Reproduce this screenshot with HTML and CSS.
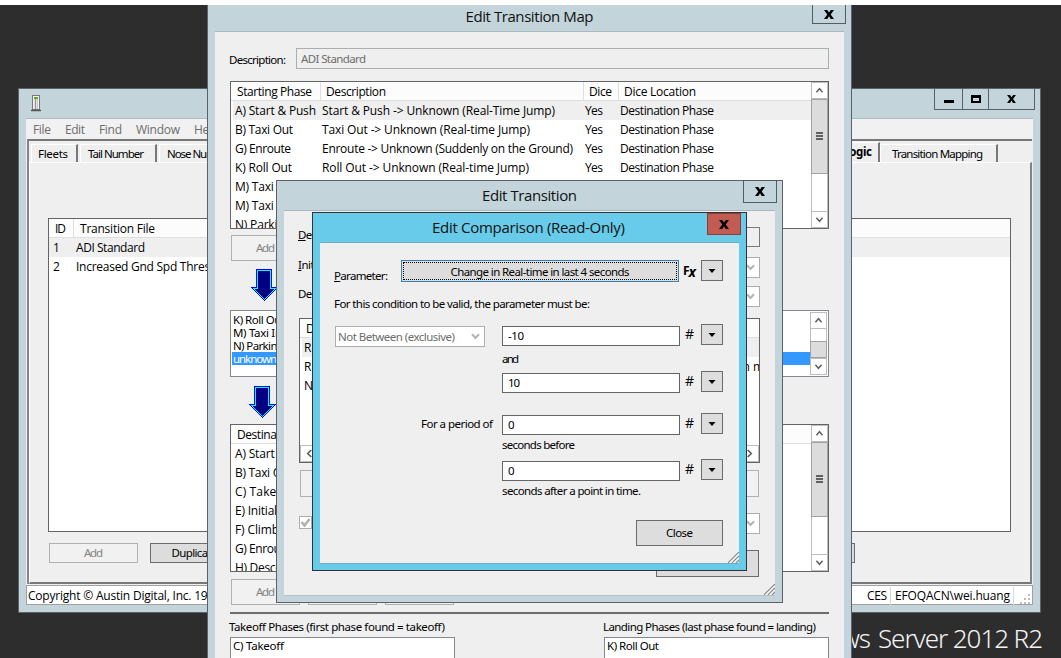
FILE: index.html
```html
<!DOCTYPE html>
<html lang="en">
<head>
<meta charset="utf-8">
<title>Edit Transition Map</title>
<link rel="stylesheet" href="styles.css">
</head>
<body>
<svg class="defs" width="0" height="0">
  <symbol id="up" viewBox="0 0 17 17"><path d="M5 10.5 8.5 6.5 12 10.5" fill="none" stroke="#606060" stroke-width="1.7"/></symbol>
  <symbol id="down" viewBox="0 0 17 17"><path d="M5 6.5 8.5 10.5 12 6.5" fill="none" stroke="#606060" stroke-width="1.7"/></symbol>
  <symbol id="grip" viewBox="0 0 17 17"><path d="M5 5h7M5 8h7M5 11h7" stroke="#606060" stroke-width="2"/></symbol>
  <symbol id="x" viewBox="0 0 10 9"><path d="M0 0h3.2L5 2.5 6.800 0H10L6.700 4.400 10 9H6.700L5 6.300 3.300 9H0L3.300 4.400z" fill="#000"/></symbol>
  <symbol id="tri" viewBox="0 0 7 4"><path d="M0 0h7L3.500 4z" fill="#000"/></symbol>
  <symbol id="chev" viewBox="0 0 9 7"><path d="M1 1.200 4.500 5 8 1.200" fill="none" stroke="#b4b4b4" stroke-width="2"/></symbol>
  <symbol id="arrow" viewBox="0 0 28 32"><g shape-rendering="crispEdges"><path d="M6 0H22V18H28L14 32 0 18H6z" fill="#00f"/><path d="M7 1H21V19H26L14 31 2 19H7z" fill="#0ff"/><path d="M8 2H20V20H24L14 30 4 20H8z" fill="#000080"/></g></symbol>
  <symbol id="size" viewBox="0 0 11 11"><path d="M0 11 11 0M4 11 11 4M8 11 11 8" stroke="#8c8c8c" stroke-width="1.300"/><path d="M1.500 11 11 1.500M5.500 11 11 5.500" stroke="#fff"/></symbol>
</svg>
<div class="desktop">
  <div class="wm">
    <div class="wm-line"><span data-w="100">Windows</span><span data-w="165">Server 2012 R2</span></div>
    <div class="wm-act"><span data-w="144">Activate Windows</span></div>
  </div>

  <section class="win main">
    <div class="main-bar">
      <svg class="app" width="10" height="17" viewBox="0 0 10 17"><rect x="1.500" y=".5" width="7" height="14" fill="#f4f4f4" stroke="#777"/><path d="M4.500 4v10" stroke="#999" stroke-width="1.500"/><path d="M6.500 3v11" stroke="#ccc"/><rect x="3" y="2" width="4" height="2" fill="#4caf2b"/><path d="M0 15.500h10" stroke="#555" stroke-width="1.500"/></svg>
      <div class="caps">
        <div class="c1"><svg width="10" height="9"><path d="M0 5h10v3H0z"/></svg></div>
        <div class="c2"><svg width="10" height="9"><path d="M0 0h10v8H0zM2 3v3h6V3z" fill-rule="evenodd"/></svg></div>
        <div class="c3"><svg width="9" height="8"><use href="#x"/></svg></div>
      </div>
    </div>
    <div class="main-client">
      <div class="menu"><span data-w="18">File</span><span data-w="20">Edit</span><span data-w="23">Find</span><span data-w="44">Window</span><span data-w="25">Help</span></div>
      <div class="mdi">
        <div class="tabs">
          <div class="tab t1"><span data-w="30">Fleets</span></div>
          <div class="tab t2"><span data-w="56">Tail Number</span></div>
          <div class="tab t3"><span data-w="65">Nose Number</span></div>
          <div class="tab t4"><span data-w="62">Event Logic</span></div>
          <div class="tab t5"><span data-w="91">Transition Mapping</span></div>
        </div>
        <div class="pane">
          <div class="files">
            <div class="head"><div class="f-id"><span data-w="11">ID</span></div><div class="f-name"><span data-w="75">Transition File</span></div></div>
            <div class="row sel"><div class="f-id">1</div><div class="f-name"><span data-w="69">ADI Standard</span></div></div>
            <div class="row"><div class="f-id">2</div><div class="f-name"><span data-w="158">Increased Gnd Spd Threshold</span></div></div>
          </div>
          <div class="main-btns"><div class="btn off"><span data-w="19">Add</span></div><div class="btn"><span data-w="46">Duplicate</span></div><div class="btn last"></div></div>
        </div>
      </div>
      <div class="status"><span data-w="193">Copyright © Austin Digital, Inc. 1996</span><div class="s-ces"><span data-w="20">CES</span></div><div class="s-user"><span data-w="115">EFOQACN\wei.huang</span></div><svg width="18" height="17"><path d="M14 7h2M10 11h2M14 11h2M6 15h2M10 15h2M14 15h2" stroke="#bbb" stroke-width="2"/></svg></div>
    </div>
  </section>

  <section class="win map">
    <div class="title"><span data-w="128">Edit Transition Map</span></div>
    <div class="close"><svg width="10" height="9"><use href="#x"/></svg></div>
    <div class="client">
      <div class="desc"><label><span data-w="57">Description:</span></label><div class="field off"><span data-w="65">ADI Standard</span></div></div>
      <div class="list phases">
        <div class="table">
          <div class="head"><div class="p1"><span data-w="75">Starting Phase</span></div><div class="p2"><span data-w="60">Description</span></div><div class="p3"><span data-w="23">Dice</span></div><div class="p4"><span data-w="72">Dice Location</span></div></div>
          <div class="row sel"><div class="p1"><span data-w="81">A) Start &amp; Push</span></div><div class="p2"><span data-w="233">Start &amp; Push -&gt; Unknown (Real-Time Jump)</span></div><div class="p3"><span data-w="18">Yes</span></div><div class="p4"><span data-w="94">Destination Phase</span></div></div>
          <div class="row"><div class="p1"><span data-w="58">B) Taxi Out</span></div><div class="p2"><span data-w="208">Taxi Out -&gt; Unknown (Real-time Jump)</span></div><div class="p3"><span data-w="18">Yes</span></div><div class="p4"><span data-w="94">Destination Phase</span></div></div>
          <div class="row"><div class="p1"><span data-w="56">G) Enroute</span></div><div class="p2"><span data-w="251">Enroute -&gt; Unknown (Suddenly on the Ground)</span></div><div class="p3"><span data-w="18">Yes</span></div><div class="p4"><span data-w="94">Destination Phase</span></div></div>
          <div class="row"><div class="p1"><span data-w="57">K) Roll Out</span></div><div class="p2"><span data-w="207">Roll Out -&gt; Unknown (Real-time Jump)</span></div><div class="p3"><span data-w="18">Yes</span></div><div class="p4"><span data-w="94">Destination Phase</span></div></div>
          <div class="row"><div class="p1"><span data-w="52">M) Taxi In</span></div></div>
          <div class="row"><div class="p1"><span data-w="52">M) Taxi In</span></div></div>
          <div class="row"><div class="p1"><span data-w="56">N) Parking</span></div></div>
        </div>
        <div class="sb"><svg><use href="#up"/></svg><div class="thumb"><svg><use href="#grip"/></svg></div><i></i><svg><use href="#down"/></svg></div>
      </div>
      <div class="btns b1"><div class="btn off"><span data-w="19">Add</span></div></div>
      <svg class="arrow a1" width="28" height="32"><use href="#arrow"/></svg>
      <div class="list box">
        <div class="table"><div><span data-w="52">K) Roll Out</span></div><div><span data-w="49">M) Taxi In</span></div><div><span data-w="51">N) Parking</span></div><div class="picked"><span data-w="44">unknown</span></div></div>
        <div class="sb small"><svg><use href="#up"/></svg><i></i><div class="thumb"></div><svg><use href="#down"/></svg></div>
      </div>
      <svg class="arrow a2" width="28" height="32"><use href="#arrow"/></svg>
      <div class="list dest">
        <div class="table">
          <div class="head"><div class="p1 wide"><span data-w="94">Destination Phase</span></div></div>
          <div class="row"><div class="p1"><span data-w="81">A) Start &amp; Push</span></div></div>
          <div class="row"><div class="p1"><span data-w="58">B) Taxi Out</span></div></div>
          <div class="row"><div class="p1"><span data-w="57">C) Takeoff</span></div></div>
          <div class="row"><div class="p1"><span data-w="76">E) Initial Climb</span></div></div>
          <div class="row"><div class="p1"><span data-w="44">F) Climb</span></div></div>
          <div class="row"><div class="p1"><span data-w="56">G) Enroute</span></div></div>
          <div class="row"><div class="p1"><span data-w="58">H) Descent</span></div></div>
        </div>
        <div class="sb"><svg><use href="#up"/></svg><div class="thumb"><svg><use href="#grip"/></svg></div><i></i><svg><use href="#down"/></svg></div>
      </div>
      <div class="btns b2"><div class="btn off"><span data-w="19">Add</span></div><div class="btn off"></div><div class="btn off"></div></div>
      <div class="rule"></div>
      <div class="ends">
        <div><label><span data-w="216">Takeoff Phases (first phase found = takeoff)</span></label><div class="endbox"><span data-w="51">C) Takeoff</span></div></div>
        <div><label><span data-w="213">Landing Phases (last phase found = landing)</span></label><div class="endbox"><span data-w="52">K) Roll Out</span></div></div>
      </div>
    </div>
  </section>

  <section class="win trans">
    <div class="title"><span data-w="95">Edit Transition</span></div>
    <div class="close"><svg width="10" height="9"><use href="#x"/></svg></div>
    <div class="client">
      <div class="line l1"><label><span data-w="57"><u>D</u>escription:</span></label><div class="field off"></div></div>
      <div class="line l2"><label><span data-w="60"><u>I</u>nitial Phase</span></label><div class="combo"><svg width="9" height="7"><use href="#chev"/></svg></div></div>
      <div class="line l3"><label><span data-w="57">Destination</span></label><div class="combo"><svg width="9" height="7"><use href="#chev"/></svg></div></div>
      <div class="list conds">
        <div class="head"><span data-w="60">Description</span></div>
        <div class="row sel">Real-time</div>
        <div class="row">Real-time<span class="far">n m</span></div>
        <div class="row">Not</div>
        <div class="hsb"><svg viewBox="0 0 17 17"><path d="M10.500 4.500 6.500 8.500 10.500 12.500" fill="none" stroke="#606060" stroke-width="1.900"/></svg><i></i><svg viewBox="0 0 17 17"><path d="M6.500 4.500 10.500 8.500 6.500 12.500" fill="none" stroke="#606060" stroke-width="1.900"/></svg></div>
      </div>
      <div class="btn off bar"></div>
      <div class="line l4"><div class="check"><svg width="11" height="11"><path d="M1.500 5 4.500 8.500 9.500 2" fill="none" stroke="#b0b0b0" stroke-width="2.600"/></svg></div><div class="combo"><svg width="9" height="7"><use href="#chev"/></svg></div></div>
      <div class="btn ok"></div>
    </div>
    <svg class="size" width="11" height="11"><use href="#size"/></svg>
  </section>

  <section class="win comp">
    <div class="title"><span data-w="193">Edit Comparison (Read-Only)</span></div>
    <div class="close"><svg width="10" height="9"><use href="#x"/></svg></div>
    <div class="client">
      <div class="c-row r1"><label><span data-w="54"><u>P</u>arameter:</span></label><div class="btn focus"><div><span data-w="179">Change in Real-time in last 4 seconds</span></div></div><div class="fx">F<em>x</em></div><div class="btn dd"><svg width="8" height="4"><use href="#tri"/></svg></div></div>
      <p class="intro"><span data-w="256">For this condition to be valid, the parameter must be:</span></p>
      <div class="c-row r2"><div class="combo"><span data-w="117">Not Between (exclusive)</span><svg width="9" height="7"><use href="#chev"/></svg></div><div class="field"><span data-w="16">-10</span></div><b>#</b><div class="btn dd"><svg width="8" height="4"><use href="#tri"/></svg></div></div>
      <p class="under"><span data-w="17">and</span></p>
      <div class="c-row r3"><div class="field"><span data-w="12">10</span></div><b>#</b><div class="btn dd"><svg width="8" height="4"><use href="#tri"/></svg></div></div>
      <div class="c-row r4"><label><span data-w="72">For a period of</span></label><div class="field">0</div><b>#</b><div class="btn dd"><svg width="8" height="4"><use href="#tri"/></svg></div></div>
      <p class="under"><span data-w="73">seconds before</span></p>
      <div class="c-row r5"><div class="field">0</div><b>#</b><div class="btn dd"><svg width="8" height="4"><use href="#tri"/></svg></div></div>
      <p class="under"><span data-w="139">seconds after a point in time.</span></p>
      <div class="btn done"><span data-w="27">Close</span></div>
    </div>
    <svg class="size" width="11" height="11"><use href="#size"/></svg>
  </section>
</div>
<script src="fit.js"></script>
</body>
</html>
```
FILE: styles.css
```css
* { box-sizing: border-box; }
body { margin: 0; background: #fff; font: 11.5px/14px "Noto Sans", "Open Sans", sans-serif; color: #000; }
.defs { position: absolute; }
svg { display: block; flex: none; }
p { margin: 0; }
[data-w] { display: inline-block; white-space: pre; }
.desktop { position: relative; width: 1061px; height: 658px; overflow: hidden; background: #2d2d2d; border-top: 5px solid #fff; }

.wm { position: absolute; right: 18px; top: 614px; color: #f4f4f4; font-family: "Noto Sans", sans-serif; }
.wm-line { display: flex; justify-content: flex-end; gap: 7px; font-size: 26px; line-height: 38px; font-weight: 300; }
.wm-act { margin: -4px 0 0 92px; font-size: 18px; line-height: 26px; color: #858585; width: 173px; }

/* windows */
.win { position: absolute; background: #c3d5db; border: 1px solid #5b6069; }
.title { text-align: center; font: 15px/20px "Open Sans", sans-serif; color: #111; }
.close { position: absolute; top: -1px; right: 5px; width: 34px; height: 23px; border: 1px solid #555b66; display: flex; align-items: center; justify-content: center; }
.client { background: #efefef; border-top: 1px solid #a9b8be; border-bottom: 1px solid #b4c1c7; }
.size { position: absolute; right: 7px; bottom: 7px; }

/* controls */
.btn { border: 1px solid #6c6c6c; background: #ddd; display: flex; align-items: center; justify-content: center; flex: none; }
.btn.off { border-color: #adb2b5; background: #f1f1f1; color: #838383; }
.field { border: 1px solid #646464; background: #fff; display: flex; align-items: center; padding-left: 5px; flex: none; }
.field.off { background: #efefef; border-color: #a8aeb1; color: #6d6d6d; }
.combo { border: 1px solid #adadad; background: #fff; display: flex; align-items: center; justify-content: space-between; color: #6d6d6d; padding: 0 4px 0 2px; flex: none; }
.list { border: 1px solid #646464; background: #fff; overflow: hidden; display: flex; }
.table { flex: 1; min-width: 0; overflow: hidden; }
.head, .row { display: flex; height: 19px; font: 12px/20px "Open Sans", sans-serif; white-space: nowrap; }
.head { background: #fcfcfc; border-bottom: 1px solid #dedede; }
.row.sel { background: linear-gradient(90deg, #fff 2px, #efefef 2px); }
.sb { width: 17px; display: flex; flex-direction: column; background: #fff; border-left: 1px solid #bcbcbc; border-right: 1px solid #bcbcbc; flex: none; }
.sb > svg { width: 15px; height: 17px; border: solid #bcbcbc; border-width: 1px 0; }
.sb i { flex: 1; }
.thumb { height: 75px; margin: 0 -1px; background: #dcdcdc; border: 1px solid #a2a2a2; display: flex; align-items: center; justify-content: center; }
.thumb svg { width: 17px; height: 17px; }

/* main window */
.main { left: 18px; top: 83px; width: 1023px; height: 525px; padding: 0 7px 7px; }
.main-bar { height: 29px; display: flex; justify-content: space-between; }
.app { margin: 6px 0 0 5px; }
.caps { display: flex; margin: -1px -2px 0 0; height: 22px; }
.caps div { border: 1px solid #5b6069; border-right: 0; display: flex; align-items: center; justify-content: center; }
.caps .c1 { width: 28px; } .caps .c2 { width: 26px; }
.caps .c3 { width: 47px; border-right: 1px solid #5b6069; }
.main-client { height: 487px; background: #efefef; border-top: 1px solid #aebcc3; }
.menu { height: 20px; padding-left: 7px; display: flex; gap: 14px; font: 12px/21px "Open Sans", sans-serif; color: #6d6d6d; background: #f1f1f1; }
.mdi { margin: 0 1px; height: 445px; border-top: 2px solid #777; border-left: 2px solid #858585; display: flex; flex-direction: column; }
.tabs { height: 21px; display: flex; align-items: flex-end; padding-left: 2px; }
.tab { height: 18px; border-top: 1px solid #fff; border-left: 1px solid #fff; border-right: 2px solid #777; line-height: 18px; padding-left: 6px; margin-right: 2px; overflow: hidden; }
.t1 { width: 47px; } .t2 { width: 77px; padding-left: 7px; } .t3 { width: 85px; padding-left: 7px; }
.t4 { width: 100px; height: 20px; margin-left: 534px; margin-right: 0; text-align: right; padding-right: 6px; font-weight: bold; }
.t5 { width: 118px; padding-left: 11px; }
.pane { flex: 1; border-top: 1px solid #fff; border-left: 1px solid #fff; border-right: 2px solid #828282; border-bottom: 2px solid #777; padding: 55px 18px 0; }
.files { width: 963px; height: 314px; border: 1px solid #646464; background: #fff; }
.f-id { width: 27px; padding-left: 4px; }
.head .f-id { width: 25px; padding-left: 6px; border-right: 1px solid #dedede; }
.head .f-name { padding-left: 6px; }
.files .row.sel { background: #efefef; }
.main-btns { display: flex; margin: 11px 0 0 1px; gap: 12px; }
.main-btns .btn { width: 89px; height: 20px; }
.main-btns .last { margin-left: 515px; }
.status { margin-top: 1px; height: 20px; background: #fff; border: 1px solid #a0a0a0; display: flex; align-items: center; padding: 2px 0 0 1px; font: 12px/18px "Open Sans", sans-serif; }
.s-ces { margin-left: auto; border-right: 1px solid #d7d7d7; padding-right: 3px; }
.s-user { padding: 0 3px 0 4px; border-right: 1px solid #d7d7d7; }

/* map window */
.map { left: 207px; top: -1px; width: 645px; height: 680px; padding: 0 7px; }
.map .title { height: 26px; line-height: 23px; }
.map .close { height: 20px; top: -1px; }
.map .client { height: 650px; padding: 0 14px 0 15px; }
.desc { display: flex; align-items: center; margin-top: 16px; height: 21px; }
.desc label { width: 66px; margin-left: -1px; margin-right: 1px; padding-top: 2px; }
.desc .field { width: 533px; height: 21px; padding-left: 4px; }
.phases { margin-top: 12px; width: 599px; height: 148px; }
.p1 { width: 91px; padding-left: 4px; }
.p2 { width: 263px; }
.p3 { width: 35px; }
.head .p1 { width: 90px; padding-left: 6px; border-right: 1px solid #dedede; }
.head .p1.wide { width: 200px; }
.head .p2 { padding-left: 5px; border-right: 1px solid #dedede; }
.head .p3 { padding-left: 5px; border-right: 1px solid #dedede; }
.head .p4 { padding-left: 5px; }
.btns { display: flex; gap: 8px; margin-left: 1px; }
.btns .btn { width: 69px; height: 26px; }
.b1 { margin-top: 6px; }
.arrow { margin: 8px 0 0 20px; }
.a2 { margin: 9px 0 0 18px; }
.box { margin-top: 9px; width: 599px; height: 67px; border-color: #828790; padding: 1px; }
.box .table { line-height: 13px; padding-top: 1px; }
.box .table div { padding-left: 1px; height: 13px; }
.box .picked { background: #39f; color: #fff; }
.small .thumb { height: 17px; }
.dest { margin-top: 6px; width: 599px; height: 148px; }
.b2 { margin-top: 7px; }
.rule { margin-top: 7px; height: 2px; width: 599px; background: #6c6c6c; }
.ends { display: flex; justify-content: space-between; margin-top: 6px; width: 599px; }
.ends > div { width: 225px; }
.ends label { display: block; margin-left: -1px; height: 17px; white-space: nowrap; }
.endbox { height: 40px; border: 1px solid #828790; background: #fff; padding: 1px 2px; }

/* transition window */
.trans { left: 276px; top: 175px; width: 507px; height: 423px; padding: 0 7px; }
.trans .title { height: 29px; line-height: 29px; }
.trans .client { height: 386px; padding: 16px 15px 0; }
.line { display: flex; justify-content: space-between; height: 21px; }
.line label { margin-left: -1px; padding-top: 1px; }
.line .field { width: 380px; height: 20px; border-color: #7a7a7a; }
.line .combo { width: 380px; height: 21px; justify-content: flex-end; }
.l2 { margin-top: 9px; } .l3 { margin-top: 8px; }
.conds { margin-top: 11px; height: 145px; flex-direction: column; }
.conds .row { padding-left: 4px; }
.conds .head { padding-left: 6px; }
.far { margin-left: auto; margin-right: -5px; }
.hsb { margin-top: auto; height: 17px; display: flex; border: 1px solid #bcbcbc; }
.hsb i { flex: 1; } .hsb svg { width: 17px; height: 15px; }
.bar { margin: 7px 1px 0; height: 27px; }
.l4 { margin-top: 16px; }
.check { width: 13px; height: 13px; margin-top: 3px; background: #fff; border: 1px solid #adadad; }
.ok { margin: 16px 1px 0 auto; width: 103px; height: 27px; }

/* comparison window */
.comp { left: 312px; top: 207px; width: 435px; height: 359px; padding: 0 7px; background: #68cbe9; border-color: #2f3338; }
.comp .title { height: 29px; line-height: 29px; padding-right: 2px; }
.comp .close { background: #c25b51; border-color: #8d3b35; height: 22px; top: 0; }
.comp .client { height: 322px; padding: 17px 16px 0 14px; border-color: #75aabd; }
.c-row { display: flex; justify-content: flex-end; height: 22px; }
.c-row .dd { width: 22px; height: 21px; }
.c-row .field { width: 178px; height: 20px; margin-top: 2px; }
.c-row b { width: 21px; padding-left: 5px; font: 14px/20px "Open Sans", sans-serif; }
.c-row .combo { width: 150px; height: 21px; margin-top: 2px; margin-right: 17px; }
.r1 label { margin-right: 13px; padding-top: 9px; }
.focus { width: 278px; height: 22px; padding: 1px; border-color: #3c7fb1; }
.focus div { flex: 1; height: 18px; line-height: 17px; border: 1px dotted #000; text-align: center; }
.fx { width: 22px; padding-left: 4px; font: bold 12px/19px "Open Sans", sans-serif; }
.fx em { font-size: 14px; position: relative; top: 2px; left: -1px; }
.intro { margin-top: 15px; height: 27px; }
.under { padding-left: 168px; height: 14px; margin-top: 6px; }
.r3 { margin-top: 5px; }
.r4 { margin-top: 20px; } .r4 label { margin-right: 9px; padding-top: 4px; }
.r4 + .under { margin-top: 3px; }
.r5 { margin-top: 7px; } .r5 + .under { margin-top: 3px; }
.done { width: 87px; height: 26px; margin: 22px 0 0 auto; }
```
FILE: fit.js
```js
document.querySelectorAll('[data-w]').forEach(function (el) {
  var n = el.textContent.length;
  var diff = Number(el.dataset.w) - el.getBoundingClientRect().width;
  var gap = diff / (n - 1);
  el.style.letterSpacing = gap.toFixed(3) + 'px';
  el.style.marginRight = (-gap).toFixed(3) + 'px';
});
```
